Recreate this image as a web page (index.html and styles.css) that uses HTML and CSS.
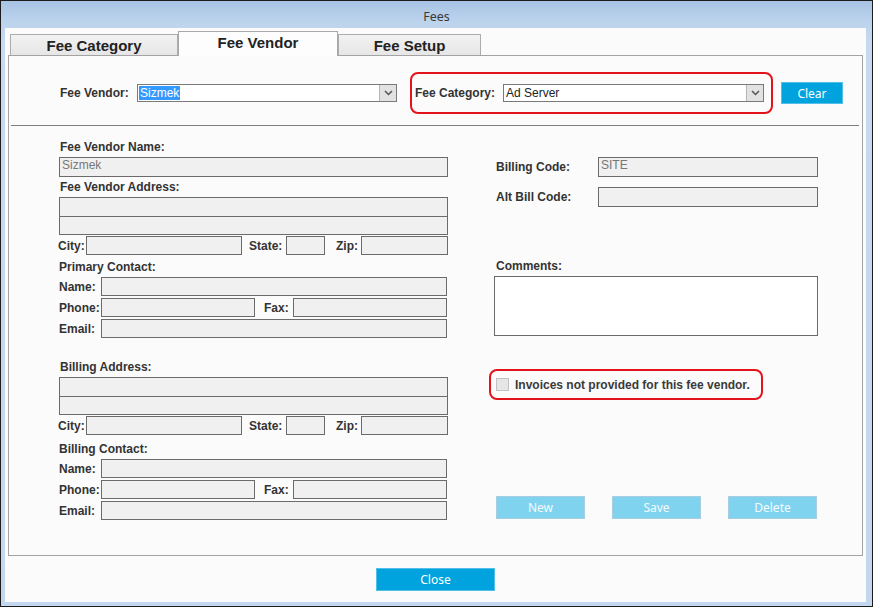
FILE: index.html
```html
<!DOCTYPE html>
<html>
<head>
<meta charset="utf-8">
<link rel="stylesheet" href="styles.css">
</head>
<body>
<div class="window">
  <div class="titlebar">Fees</div>
  <div class="client">
    <div class="tabs">
      <div class="tab t1">Fee Category</div>
      <div class="tab active t2">Fee Vendor</div>
      <div class="tab t3">Fee Setup</div>
    </div>
    <div class="panel">
      <div class="toprow">
        <div class="lbl fv-lbl">Fee Vendor:</div>
        <div class="combo fv-combo"><span class="sel">Sizmek</span><span class="arrow"><svg width="9" height="6" viewBox="0 0 9 6"><path d="M1 1 L4.5 4.5 L8 1" fill="none" stroke="#555" stroke-width="1.5"/></svg></span></div>
        <div class="redbox catbox">
          <div class="lbl fc-lbl">Fee Category:</div>
          <div class="combo fc-combo"><span class="val">Ad Server</span><span class="arrow"><svg width="9" height="6" viewBox="0 0 9 6"><path d="M1 1 L4.5 4.5 L8 1" fill="none" stroke="#555" stroke-width="1.5"/></svg></span></div>
        </div>
        <div class="btn clear">Clear</div>
      </div>
      <div class="rule"></div>
      <div class="body">
        <div class="leftcol">
          <div class="lbl head">Fee Vendor Name:</div>
          <div class="inp full">Sizmek</div>
          <div class="lbl head">Fee Vendor Address:</div>
          <div class="inp full"></div>
          <div class="inp full second"></div>
          <div class="row cityrow">
            <div class="lbl city-l">City:</div>
            <div class="inp city"></div>
            <div class="lbl state-l">State:</div>
            <div class="inp state"></div>
            <div class="lbl zip-l">Zip:</div>
            <div class="inp zip"></div>
          </div>
          <div class="lbl head2">Primary Contact:</div>
          <div class="row crow">
            <div class="lbl c-l">Name:</div>
            <div class="inp wide"></div>
          </div>
          <div class="row crow g2">
            <div class="lbl c-l">Phone:</div>
            <div class="inp half"></div>
            <div class="lbl fax-l">Fax:</div>
            <div class="inp half"></div>
          </div>
          <div class="row crow g2">
            <div class="lbl c-l">Email:</div>
            <div class="inp wide"></div>
          </div>

          <div class="lbl head bill">Billing Address:</div>
          <div class="inp full"></div>
          <div class="inp full second"></div>
          <div class="row cityrow">
            <div class="lbl city-l">City:</div>
            <div class="inp city"></div>
            <div class="lbl state-l">State:</div>
            <div class="inp state"></div>
            <div class="lbl zip-l">Zip:</div>
            <div class="inp zip"></div>
          </div>
          <div class="lbl head2 bc">Billing Contact:</div>
          <div class="row crow">
            <div class="lbl c-l">Name:</div>
            <div class="inp wide"></div>
          </div>
          <div class="row crow g2">
            <div class="lbl c-l">Phone:</div>
            <div class="inp half"></div>
            <div class="lbl fax-l">Fax:</div>
            <div class="inp half"></div>
          </div>
          <div class="row crow g2">
            <div class="lbl c-l">Email:</div>
            <div class="inp wide"></div>
          </div>
        </div>
        <div class="rightcol">
          <div class="row coderow">
            <div class="lbl code-l">Billing Code:</div>
            <div class="inp code">SITE</div>
          </div>
          <div class="row coderow alt">
            <div class="lbl code-l">Alt Bill Code:</div>
            <div class="inp code"></div>
          </div>
          <div class="lbl comm-l">Comments:</div>
          <div class="textarea"></div>
          <div class="redbox invbox">
            <span class="check"></span>
            <span class="lbl inv">Invoices not provided for this fee vendor.</span>
          </div>
          <div class="actions">
            <div class="btn light">New</div>
            <div class="btn light">Save</div>
            <div class="btn light">Delete</div>
          </div>
        </div>
      </div>
    </div>
    <div class="footer">
      <div class="btn close">Close</div>
    </div>
  </div>
</div>
</body>
</html>
```
FILE: styles.css
```css
* { box-sizing: border-box; }
html, body { margin: 0; padding: 0; }
body {
  width: 873px;
  height: 607px;
  overflow: hidden;
  font-family: "Liberation Sans", Arial, sans-serif;
  background: #000;
}
.window {
  width: 873px;
  height: 607px;
  border: 1px solid #1c1c1c;
  background: linear-gradient(#a7c3e5 0px, #bcd3ec 20px, #c5daf0 40px, #c3d8ee 100%);
  display: flex;
  flex-direction: column;
}
.titlebar {
  height: 27px;
  line-height: 31px;
  text-align: center;
  font-family: "Noto Sans", "Open Sans", sans-serif;
  font-size: 12.5px;
  color: #3a3a3a;
  padding-right: 0px;
}
.client {
  flex: 1;
  margin: 0 6px 4px 4px;
  background: #fbfbfb;
  display: flex;
  flex-direction: column;
}
.tabs {
  height: 27px;
  padding: 3px 0 0 5px;
  display: flex;
  align-items: flex-start;
  position: relative;
  z-index: 2;
}
.tab {
  height: 21px;
  margin-top: 3px;
  border: 1px solid #acacac;
  border-bottom: none;
  background: linear-gradient(#f2f2f2, #e6e6e6);
  font-weight: bold;
  font-size: 15px;
  color: #222;
  text-align: center;
  line-height: 21px;
}
.t1 { width: 168px; }
.t2 { width: 160px; }
.t3 { width: 143px; }
.tab.active {
  margin-top: 0;
  height: 25px;
  background: #fdfdfd;
  line-height: 22px;
  border-color: #a8a8a8;
}
.panel {
  height: 501px;
  margin: 0 3px;
  border: 1px solid #a3a3a3;
  background: #fbfbfb;
  display: flex;
  flex-direction: column;
}
.lbl {
  font-weight: bold;
  font-size: 12px;
  color: #333;
  white-space: nowrap;
}
.toprow {
  display: flex;
  align-items: center;
  padding: 16px 0 0 51px;
  height: 58px;
}
.fv-lbl { width: 77px; }
.combo {
  height: 18px;
  border: 1px solid #7a7a7a;
  background: #fff;
  display: flex;
  align-items: center;
  font-size: 12px;
  color: #222;
  position: relative;
}
.fv-combo { width: 260px; }
.fc-combo { width: 261px; }
.sel {
  background: #3399ff;
  color: #fff;
  margin-left: 1px;
  padding: 0 1px;
  line-height: 14px;
}
.val { padding-left: 2px; }
.arrow {
  margin-left: auto;
  width: 17px;
  height: 16px;
  background: #e2e2e2;
  border-left: 1px solid #b5b5b5;
  display: flex;
  align-items: center;
  justify-content: center;
}
.redbox {
  border: 2px solid #e4121b;
  border-radius: 8px;
}
.catbox {
  margin-left: 13px;
  width: 363px;
  height: 42px;
  padding: 0 7px 0 3px;
  display: flex;
  align-items: center;
}
.fc-lbl { width: 88px; }
.btn {
  display: flex;
  align-items: center;
  justify-content: center;
  font-size: 12px;
  color: #fff;
  font-family: "Noto Sans", "Liberation Sans", sans-serif;
}
.clear {
  margin-left: 8px;
  width: 62px;
  height: 22px;
  background: #00a3de;
  border: 1px solid #54c0e8;
}
.rule {
  height: 1px;
  background: #7f7f7f;
  margin: 11px 3px 0 2px;
}
.body {
  display: flex;
  padding-top: 11px;
}
.leftcol {
  margin-left: 49px;
  width: 390px;
  display: flex;
  flex-direction: column;
}
.inp {
  height: 19px;
  border: 1px solid #6b6b6b;
  background: #f0f0f0;
  font-size: 12px;
  color: #777;
  padding-left: 2px;
  line-height: 15px;
}
.head { height: 20px; line-height: 20px; padding-left: 2px; }
.head2 { height: 20px; line-height: 20px; padding-left: 1px; margin-top: 2px; }
.full { width: 389px; margin-left: 1px; height: 20px; }
.full.second { margin-top: -1px; height: 19px; }
.row { display: flex; align-items: center; }
.cityrow { margin-top: 1px; height: 19px; }
.cityrow .inp { height: 19px; }
.city-l { width: 28px; }
.city { width: 156px; }
.state-l { width: 44px; padding-left: 7px; }
.state { width: 39px; }
.zip-l { width: 36px; padding-left: 11px; }
.zip { width: 87px; }
.crow { height: 19px; }
.crow.g2 { margin-top: 2px; }
.c-l { width: 42px; margin-left: 1px; }
.wide { width: 346px; }
.half { width: 154px; }
.fax-l { width: 38px; padding-left: 9px; }
.bill { margin-top: 19px; }
.bc { margin-top: 4px; }

.rightcol {
  margin-left: 46px;
  width: 324px;
  display: flex;
  flex-direction: column;
}
.coderow { margin-top: 20px; height: 20px; }
.coderow.alt { margin-top: 10px; }
.code-l { width: 104px; padding-left: 2px; }
.code { width: 220px; height: 20px; }
.comm-l { margin-top: 49px; height: 20px; line-height: 20px; padding-left: 2px; }
.textarea {
  height: 60px;
  border: 1px solid #6b6b6b;
  background: #fff;
}
.invbox {
  margin-top: 33px;
  margin-left: -5px;
  width: 274px;
  height: 31px;
  padding-left: 5px;
  display: flex;
  align-items: center;
}
.check {
  width: 13px;
  height: 13px;
  background: #e6e6e6;
  border: 1px solid #c2c2c2;
  margin-right: 6px;
}
.inv { color: #3a3a3a; }
.actions {
  margin-top: 96px;
  margin-left: 2px;
  display: flex;
  gap: 27px;
}
.btn.light {
  width: 89px;
  height: 23px;
  background: #80d3ef;
  border: 1px solid #a9cde0;
  color: #f4fbfe;
}
.footer {
  display: flex;
  justify-content: center;
  padding-top: 12px;
}
.close {
  width: 119px;
  height: 23px;
  background: #00a3de;
  border: 1px solid #52bfe8;
}
```
